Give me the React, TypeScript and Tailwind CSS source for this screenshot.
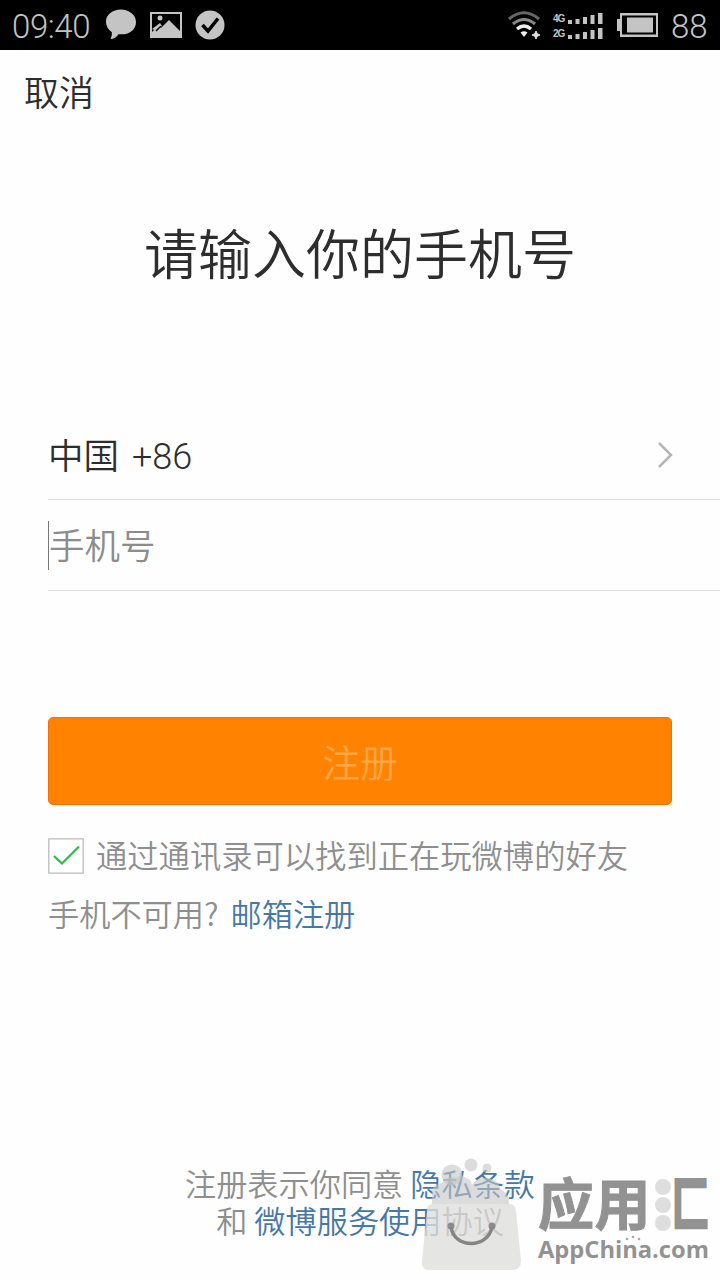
import React from "react";

const grey = "#c4c4c4";

function StatusBar() {
  return (
    <header className="flex h-[50px] w-full items-center justify-between bg-black pl-[12px] pr-[12px] font-['Roboto'] text-[#c4c4c4]">
      <div className="flex items-center">
        <span className="w-[93px] pt-[3px] text-[33px] leading-[47px] font-light tracking-[-0.4px]">09:40</span>
        <svg width="32" height="32" viewBox="0 0 32 32" fill={grey}>
          <path d="M16 0.500C7.500.5 1 5.900 1 12.500c0 4.700 2.500 8.300 5.800 10.600.2 2.500-.1 4.600-1.200 7 4.300-.5 6-2.500 7.900-4.900C24.500 26.500 31 20.300 31 12.900 31 6.100 24.300.5 16 .5Z" />
        </svg>
        <svg className="ml-[12px]" width="34" height="28" viewBox="0 0 34 28">
          <path fillRule="evenodd" fill={grey} d="M1 1h32v26H1ZM3 3v18l6-6 3 2 8-8 11 11V3Z" />
          <circle cx="11" cy="7" r="2.500" fill={grey} />
          <path d="m3 18 8-6 2 3-5 5" fill={grey} />
          <path d="m7 20 5-5" stroke="#000" strokeWidth="1.500" />
        </svg>
        <svg className="ml-[11px]" width="32" height="32" viewBox="0 0 32 32">
          <circle cx="16" cy="16" r="14.500" fill={grey} />
          <path d="m8.500 16 5.500 6L24 9.500" fill="none" stroke="#000" strokeWidth="3.500" />
        </svg>
      </div>
      <div className="flex items-center">
        <svg width="34" height="28" viewBox="0 0 34 28" fill="none">
          <path d="M2 8Q17-4.500 32 8" stroke="#666" strokeWidth="3" />
          <path d="M6 13Q17 4 28 13" stroke="#888" strokeWidth="3" />
          <path d="M10 18Q17 12 24 18" stroke="#eee" strokeWidth="3.200" />
          <path d="m13.500 21.500 3.500 4.500 3.500-4.500q-3.500-2.500-7 0Z" fill="#eee" />
          <path d="m29 20 1.300 2.700L33 24l-2.700 1.300L29 28l-1.300-2.700L25 24l2.700-1.300Z" fill="#ddd" stroke="#ddd" />
        </svg>
        <div className="ml-[12px] mt-[1px] flex flex-col gap-[4px]">
          {["4G", "2G"].map((label) => (
            <div key={label} className="flex h-[11px] items-end">
              <span className="w-[13px] font-['Liberation_Sans'] text-[10px] leading-[11px] font-bold tracking-[-1px]">{label}</span>
              <svg width="37" height="11" viewBox="0 0 37 11" fill={grey}>
                <path d="M2 7h4v4H2ZM9.500 6h4v5h-4ZM17 4h4v7h-4ZM24.500 2h4v9h-4ZM32 0h4.500v11H32Z" />
              </svg>
            </div>
          ))}
        </div>
        <svg className="ml-[13px]" width="43" height="28" viewBox="0 0 43 28">
          <path d="M4 2h38v24H4V20H1V8h3Z" fill={grey} />
          <path d="M6 4.500h34v19H6Z" fill="#000" />
          <path d="M11 6.500h26v15H11Z" fill={grey} />
        </svg>
        <span className="ml-[12px] w-[37px] pt-[3px] text-[33px] leading-[47px] font-light">88</span>
      </div>
    </header>
  );
}

function Watermark() {
  return (
    <div className="absolute left-[420px] top-[1154px] flex h-[120px] w-[300px]">
      <svg className="h-[120px] w-[106px] shrink-0" viewBox="0 0 106 120">
        <g fill="#c4c4c4" fillOpacity=".6">
          <circle cx="51" cy="11" r="6.500" />
          <circle cx="67" cy="14" r="4.500" />
          <circle cx="32" cy="21" r="10.500" />
          <path d="M12 50V37q1-7 10-8 5-9 14-5 5-5 10 0 5 1 6 7 7-10 19-6 8 2 9 10 9 3 9 15Z" />
        </g>
        <path d="M12 50h78q5 0 6 7l5 50q0 9-9 9H10q-9 0-8-9l5-50q0-7 5-7Z" fill="#dfdfdd" fillOpacity=".8" />
        <circle cx="31" cy="72" r="3.500" fill="#8c8c8c" />
        <circle cx="72" cy="72" r="3.500" fill="#8c8c8c" />
        <path d="M31 73C34 95 68 95 72 73" fill="none" stroke="#858585" strokeWidth="3.500" />
      </svg>
      <div className="flex flex-col pl-[12px] pt-[17px] text-[#929292]">
        <div className="flex h-[64px] items-start">
          <span className="w-[116px] text-[56px] leading-[60px] font-bold tracking-[0.5px] [-webkit-text-stroke:1px_#929292]">应用</span>
          <svg className="mt-[7px]" width="18" height="54" viewBox="0 0 18 54" fill="#dedede">
            <circle cx="9" cy="9" r="8" />
            <circle cx="9" cy="27" r="8" />
            <circle cx="9" cy="45" r="8" />
          </svg>
          <span className="w-[40px] origin-left scale-x-[.65] text-[57px] leading-[59px] font-black [-webkit-text-stroke:2.500px_#929292]">匚</span>
        </div>
        <span className="w-[174px] whitespace-nowrap font-['Open_Sans'] text-[23.700px] leading-[29px] font-bold">AppChina.com</span>
      </div>
      <svg className="absolute left-[204px] top-[81px]" width="18" height="6" viewBox="0 0 18 6" fill="#aaa">
        <circle cx="3" cy="4" r="1.300" /><circle cx="9" cy="2" r="1.300" /><circle cx="15" cy="4" r="1.300" />
      </svg>
    </div>
  );
}

export default function App() {
  return (
    <div className="relative flex h-[1280px] w-[720px] flex-col overflow-hidden bg-[#fefefe] font-['Noto_Sans_CJK_SC',sans-serif] font-[350] text-[#2d2d2d]">
      <StatusBar />
      <nav className="h-[82px] pl-[24px] text-[35px] leading-[82px]">取消</nav>
      <h1 className="mt-[77px] h-[86px] text-center text-[54px] leading-[86px] font-[350]">请输入你的手机号</h1>
      <main className="mt-[114px] flex flex-col pl-[48px]">
        <div className="flex h-[91px] items-center justify-between border-b border-[#dedede] pr-[46px]">
          <span className="pt-[2px] text-[35.500px] leading-[88px]">中国<span className="ml-[13px] font-['Roboto'] text-[36px] font-light">+86</span></span>
          <svg className="mt-[2px]" width="18" height="30" viewBox="0 0 18 30" fill="none">
            <path d="m3 3 12 12L3 27" stroke="#b5b5b5" strokeWidth="2.500" />
          </svg>
        </div>
        <div className="flex h-[91px] items-center border-b border-[#dedede]">
          <span className="h-[49px] w-px bg-[#777]" />
          <span className="pb-[2px] text-[35.500px] leading-[84px] text-[#8c8c8c]">手机号</span>
        </div>
        <button className="mt-[126px] h-[88px] w-[624px] rounded-[5px] border border-[#f0730a] bg-[#ff8200] text-[37.500px] leading-[84px] font-[350] text-[#ffa748]">
          注册
        </button>
        <label className="mt-[29px] flex h-[44px] items-center text-[#8e8e8e]">
          <svg width="36" height="36" viewBox="0 0 36 36" fill="none">
            <path d="M.8.800h34.400v34.400H.800Z" fill="#fff" stroke="#bbb" strokeWidth="1.300" />
            <path d="m6 18 8 7.500L31 8.500" stroke="#2dbb4e" strokeWidth="2.200" />
          </svg>
          <span className="ml-[12px] pb-[2px] text-[31.300px] leading-[42px]">通过通讯录可以找到正在玩微博的好友</span>
        </label>
        <p className="mt-[12px] h-[46px] text-[31.200px] leading-[45px] text-[#8e8e8e]">
          手机不可用?<span className="ml-[12px] text-[#4678a6]">邮箱注册</span>
        </p>
      </main>
      <footer className="mt-[229px] flex flex-col items-center text-[31.200px] leading-[36.500px] text-[#8e8e8e]">
        <p>注册表示你同意 <span className="text-[#4678a6]">隐私条款</span></p>
        <p>和 <span className="text-[#4678a6]">微博服务使用<span className="text-[#707070]">协议</span></span></p>
      </footer>
      <Watermark />
    </div>
  );
}
